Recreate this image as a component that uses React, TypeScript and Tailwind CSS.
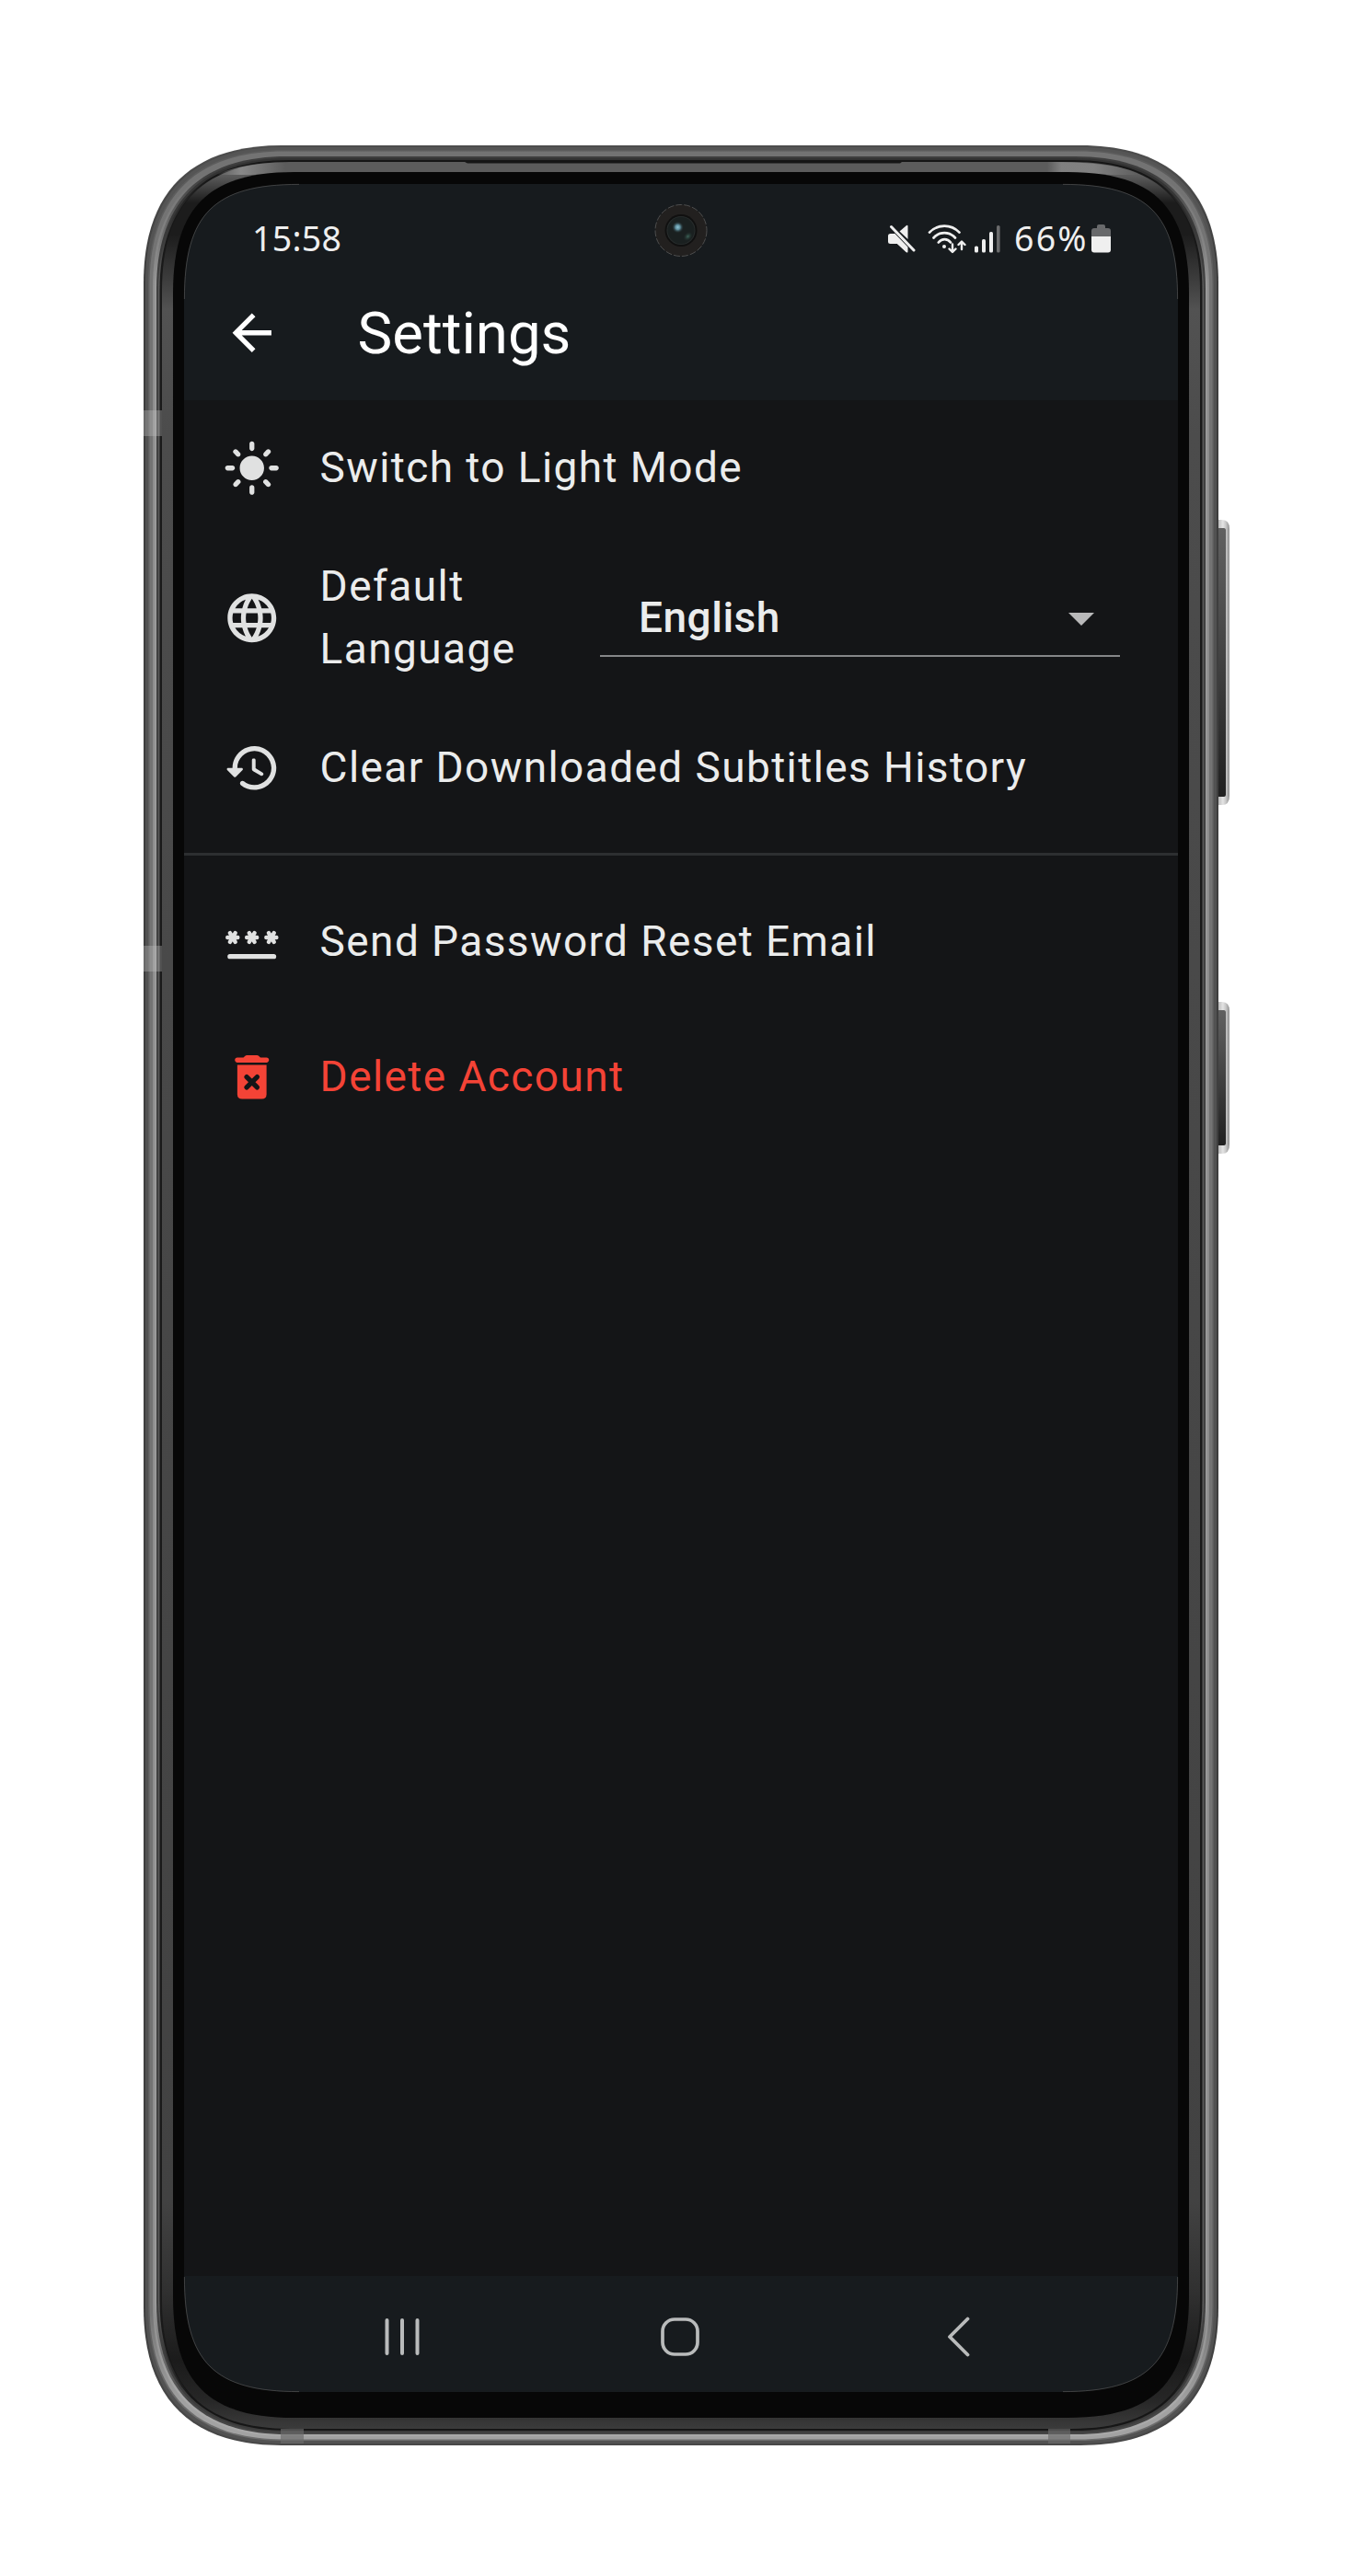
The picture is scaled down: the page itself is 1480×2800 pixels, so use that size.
import type { ReactNode } from "react";
import { MdLanguage, MdLightMode } from "react-icons/md";

/** Closed outline of a box with smoothed corners. */
function outline(l: number, t: number, r: number, b: number, e: number, k: number) {
  const c = e * k;
  return `M${l} ${t + e}C${l} ${t + c} ${l + c} ${t} ${l + e} ${t}H${r - e}C${r - c} ${t} ${r} ${t + c} ${r} ${t + e}V${b - e}C${r} ${b - c} ${r - c} ${b} ${r - e} ${b}H${l + e}C${l + c} ${b} ${l} ${b - c} ${l} ${b - e}Z`;
}

const SCREEN = outline(200, 200, 1280, 2600, 125, 0.26);

/** Metal bands from the outside in: inset, colour at the top, sides and bottom. */
const BANDS: [number, string, string, string][] = [
  [0, "#4c4c4c", "#3e3e3e", "#484848"],
  [2, "#555555", "#525252", "#525252"],
  [5, "#5c5c5c", "#5e5e5e", "#6c6c6c"],
  [6.5, "#737373", "#747474", "#a2a2a2"],
  [10, "#737373", "#8e8e8e", "#a9a9a9"],
  [12, "#3e3e3e", "#9a9a9a", "#454545"],
  [14, "#333333", "#404040", "#3c3c3c"],
  [16, "#161616", "#5a5a5a", "#161616"],
  [17.5, "#161616", "#1a1a1a", "#161616"],
];

function DeviceFrame() {
  return (
    <svg className="pointer-events-none absolute inset-0" width="1480" height="2800" viewBox="0 0 1480 2800">
      <defs>
        {BANDS.map(([i, a, b, c]) => (
          <linearGradient key={i} id={`band${i}`} x1="0" y1="0" x2="0" y2="1">
            <stop offset="0.008" stopColor={a} />
            <stop offset="0.055" stopColor={b} />
            <stop offset="0.945" stopColor={b} />
            <stop offset="0.985" stopColor={c} />
          </linearGradient>
        ))}
        <linearGradient id="lip" gradientUnits="userSpaceOnUse" x1="0" y1="176" x2="0" y2="2640">
          <stop offset="0" stopColor="#5c5c5c" />
          <stop offset="0.006" stopColor="#5c5c5c" />
          <stop offset="0.018" stopColor="#1c1c1c" />
          <stop offset="0.032" stopColor="#1c1c1c" />
          <stop offset="0.065" stopColor="#525252" />
          <stop offset="0.12" stopColor="#4c4c4c" />
          <stop offset="0.9" stopColor="#424242" />
          <stop offset="0.94" stopColor="#303030" />
          <stop offset="0.97" stopColor="#1b1b1b" />
          <stop offset="0.987" stopColor="#262626" />
          <stop offset="1" stopColor="#3b3b3b" />
        </linearGradient>
        <linearGradient id="glowL" gradientUnits="userSpaceOnUse" x1="236" y1="0" x2="310" y2="0">
          <stop offset="0" stopColor="#909090" stopOpacity="0" />
          <stop offset="0.35" stopColor="#909090" stopOpacity="0.85" />
          <stop offset="1" stopColor="#909090" stopOpacity="0" />
        </linearGradient>
        <linearGradient id="glowR" gradientUnits="userSpaceOnUse" x1="1240" y1="0" x2="1138" y2="0">
          <stop offset="0" stopColor="#909090" stopOpacity="0" />
          <stop offset="0.5" stopColor="#909090" stopOpacity="0.7" />
          <stop offset="0.85" stopColor="#909090" stopOpacity="0.7" />
          <stop offset="1" stopColor="#909090" stopOpacity="0" />
        </linearGradient>
        <linearGradient id="keyFace" x1="0" y1="0" x2="0" y2="1">
          <stop offset="0" stopColor="#606060" />
          <stop offset="0.2" stopColor="#555555" />
          <stop offset="1" stopColor="#202020" />
        </linearGradient>
        <linearGradient id="keyRim" x1="0" y1="0" x2="1" y2="0">
          <stop offset="0" stopColor="#8c8c8c" />
          <stop offset="0.6" stopColor="#e4e4e4" />
          <stop offset="0.78" stopColor="#c8c8c8" />
          <stop offset="1" stopColor="#8f8f8f" />
        </linearGradient>
        <radialGradient id="lensBlue">
          <stop offset="0" stopColor="#8fc6d6" />
          <stop offset="0.4" stopColor="#5d8d9c" />
          <stop offset="1" stopColor="#1c2526" stopOpacity="0" />
        </radialGradient>
        <radialGradient id="lensGreen">
          <stop offset="0" stopColor="#3d6559" />
          <stop offset="1" stopColor="#1c2524" stopOpacity="0" />
        </radialGradient>
        <mask id="shell">
          <path d={`M0 0H1480V2800H0Z${SCREEN}`} fill="#fff" fillRule="evenodd" />
        </mask>
      </defs>

      {[
        [565, 310],
        [1089, 165],
      ].map(([y, h]) => (
        <g key={y}>
          <path d={`M1318 ${y}H1328Q1336 ${y} 1336 ${y + 10}V${y + h - 10}Q1336 ${y + h} 1328 ${y + h}H1318Z`} fill="url(#keyRim)" />
          <path d={`M1318 ${y + 9}H1332V${y + h - 9}H1318Z`} fill="#d8d8d8" />
          <rect x="1318" y={y + 9} width="14" height={h - 18} rx="2" fill="url(#keyFace)" />
        </g>
      ))}

      <g mask="url(#shell)">
        {BANDS.map(([i]) => (
          <path key={i} d={outline(156 + i, 158 + i, 1324 - i, 2658 - i, 150 - i * 0.55, 0.34)} fill={`url(#band${i})`} />
        ))}
        <path d={outline(176, 176, 1304, 2640, 140, 0.32)} fill="url(#lip)" />
        <path d="M236 189C260 180 285 176 316 176V190H236Z" fill="url(#glowL)" />
        <path d="M1240 189C1216 180 1191 176 1138 176V190H1240Z" fill="url(#glowR)" />
        <path d={outline(188, 187, 1292, 2628, 132, 0.29)} fill="#070707" />
      </g>
      <path d="M505 176H980L978 177.500H508Z" fill="#161616" />

      <g fill="#c8c8c8" opacity="0.32">
        <rect x="156" y="446" width="20" height="28" />
        <rect x="156" y="1028" width="20" height="28" />
      </g>
      <g fill="#6c6c6c" opacity="0.65">
        <rect x="305" y="2640" width="25" height="16" />
        <rect x="1139" y="2640" width="24" height="16" />
      </g>

      <g fill="none" stroke="#5e5e5e" strokeWidth="0.6">
        <path d="M200.400 325C200.400 232.500 232.500 200.400 325 200.400" />
        <path d="M1279.600 325C1279.600 232.500 1247.500 200.400 1155 200.400" />
        <path d="M200.400 2475C200.400 2567.500 232.500 2599.600 325 2599.600" />
        <path d="M1279.600 2475C1279.600 2567.500 1247.500 2599.600 1155 2599.600" />
      </g>

      <circle cx="740" cy="250.500" r="28" fill="#22201f" stroke="#5b5b5b" strokeWidth="0.8" strokeDasharray="7 2" />
      <circle cx="740" cy="250.500" r="17.500" fill="#101010" />
      <circle cx="740" cy="250.500" r="15" fill="#1a2020" stroke="#262b2b" strokeWidth="1.200" />
      <ellipse cx="747.500" cy="257" rx="6" ry="4.500" transform="rotate(-45 747.500 257)" fill="url(#lensGreen)" />
      <circle cx="736.500" cy="247" r="6.500" fill="url(#lensBlue)" />
    </svg>
  );
}

function MutedIcon() {
  return (
    <svg width="30" height="31" viewBox="0 0 30 31" fill="#efefef">
      <path d="M0 12.500Q0 10 2.500 10H7L21 24V29.500Q21 31 19.500 30L10 21H2.500Q0 21 0 18.500Z" />
      <path d="M12.500 7.500 19.500 1.400Q21.500 0 21.500 2V16Z" />
      <path d="M3.500 2.500 28 28" stroke="#171b1e" strokeWidth="5.500" />
      <path d="M7 9.500 21.500 24.500V29.500Q21.500 31 20 30L10 21H5Z" />
      <path d="M3.500 2.500 28 28" stroke="#efefef" strokeWidth="3" strokeLinecap="round" />
    </svg>
  );
}

function WifiIcon() {
  return (
    <svg width="42" height="32" viewBox="0 0 42 32" fill="none" stroke="#efefef" strokeWidth="2.700" strokeLinecap="round" strokeLinejoin="round">
      <path d="M2 8.600C11 -.8 25.500 -.8 34.500 8.600M6.500 14.500C13 7.300 23.500 7.300 30 14.500M11.800 19.500C15.500 15 21.500 15 25 19.500" />
      <circle cx="18" cy="24" r="2" fill="#efefef" stroke="none" />
      <path d="M27 21.500V29.500M23.500 26.500 27 30 30.500 26.500M37 27V19M33.500 22 37 18.500 40.500 22" strokeWidth="2.400" />
    </svg>
  );
}

function SignalIcon() {
  return (
    <svg width="28" height="30" viewBox="0 0 28 30" fill="#efefef">
      <rect x="0" y="22.500" width="4" height="7" rx="1.600" />
      <rect x="8" y="15" width="4" height="14.500" rx="1.600" />
      <rect x="16" y="7" width="4" height="22.500" rx="1.600" />
      <rect x="24" y="0" width="3.600" height="29.500" rx="1.600" fill="#6a6b6c" />
    </svg>
  );
}

function BatteryIcon() {
  return (
    <svg width="21" height="31" viewBox="0 0 21 31">
      <path d="M0 13V7Q0 4 3 4H6V2Q6 0 8 0H13Q15 0 15 2V4H18Q21 4 21 7V13Z" fill="#68696b" />
      <path d="M0 13H21V27.500Q21 30.500 18 30.500H3Q0 30.500 0 27.500Z" fill="#efefef" />
    </svg>
  );
}

function HistoryIcon() {
  return (
    <svg width="63.500" height="63.500" viewBox="0 0 24 24" fill="currentColor">
      <path d="M13.260 3C8.170 2.860 4 6.950 4 12H2.210c-.45 0-.67.54-.35.85l2.790 2.800c.2.2.51.2.71 0l2.790-2.800c.31-.31.09-.85-.36-.85H6c0-3.900 3.180-7.050 7.100-7 3.720.05 6.850 3.180 6.900 6.900.05 3.910-3.100 7.100-7 7.100-1.610 0-3.100-.55-4.280-1.480-.4-.31-.96-.28-1.320.08-.42.42-.39 1.130.08 1.490C9 20.290 10.910 21 13 21c5.050 0 9.140-4.170 9-9.260-.13-4.690-4.050-8.610-8.740-8.740zm-.51 5c-.41 0-.75.34-.75.75v3.680c0 .35.19.68.49.86l3.120 1.850c.36.21.82.09 1.030-.26.21-.36.09-.82-.26-1.030l-2.880-1.710v-3.400c0-.4-.34-.74-.75-.74z" />
    </svg>
  );
}

function PasswordIcon() {
  return (
    <svg width="66" height="63.500" viewBox="-.35 0 24.940 24" fill="none" stroke="currentColor" strokeLinecap="round">
      <path d="M3 18H21" strokeWidth="2" />
      {[4.1, 12, 20].map((x) => (
        <path key={x} d={`M${x - 2.1} 10.200h4.200M${x - 1.08} 8.350l2.160 3.700M${x + 1.08} 8.350l-2.160 3.700`} strokeWidth="1.650" />
      ))}
    </svg>
  );
}

function DeleteIcon() {
  return (
    <svg width="63.500" height="63.500" viewBox="0 0 24 24" fill="currentColor">
      <path d="M15.500 4l-.71-.71c-.18-.18-.44-.29-.7-.29H9.910c-.26 0-.52.11-.7.290L8.500 4H6c-.55 0-1 .45-1 1s.45 1 1 1h12c.55 0 1-.45 1-1s-.45-1-1-1z" />
      <path d="M6 7H18V19Q18 21 16 21H8Q6 21 6 19Z" />
      <path d="M9.850 11.950 14.150 16.250M14.150 11.950 9.850 16.250" stroke="#141517" strokeWidth="2" strokeLinecap="round" />
    </svg>
  );
}

function Row({ icon, children, className = "" }: { icon: ReactNode; children: ReactNode; className?: string }) {
  return (
    <li className={`flex shrink-0 items-center ${className}`}>
      <span className="flex w-[147px] shrink-0 justify-center">{icon}</span>
      {children}
    </li>
  );
}

const label = "whitespace-nowrap pl-[0.600px] text-[46px] leading-[67.500px] tracking-[1.400px]";

export default function App() {
  return (
    <div className="relative h-[2800px] w-[1480px] overflow-hidden bg-white px-[200px] pt-[200px] font-['Roboto',sans-serif]">
      <main className="flex h-[2400px] w-[1080px] flex-col bg-[#141517] text-[#ebecec]">
        <header className="h-[235px] shrink-0 bg-[#171b1e]">
          <div className="flex h-[119px] items-center justify-between pr-[73px] pl-[74px] font-['Noto_Sans',sans-serif] text-[37.500px] text-[#efefef]">
            <span className="tracking-[0.250px]">15:58</span>
            <div className="flex items-center">
              <MutedIcon />
              <span className="ml-[13px]"><WifiIcon /></span>
              <span className="ml-[9px]"><SignalIcon /></span>
              <span className="ml-[15px] w-[84px] tracking-[2.200px]">66%</span>
              <BatteryIcon />
            </div>
          </div>
          <div className="flex h-[85px] items-center text-white">
            <svg className="ml-[42px]" width="63.500" height="63.500" viewBox="0 0 24 24" fill="currentColor">
              <path d="M20 11H7.830l5.590-5.590L12 4l-8 8 8 8 1.410-1.410L7.830 13H20v-2z" />
            </svg>
            <h1 className="mt-[3px] ml-[83px] text-[63.500px] leading-none">Settings</h1>
          </div>
        </header>

        <ul>
          <Row className="h-[147px]" icon={<MdLightMode size={63.5} color="#e0e1e1" />}>
            <span className={label}>Switch to Light Mode</span>
          </Row>
          <Row className="h-[179px]" icon={<MdLanguage size={63.5} color="#e0e1e1" />}>
            <span className={`${label} w-[305px]`}>
              Default
              <br />
              Language
            </span>
            <div className="flex h-[85px] w-[565px] items-center justify-between border-b-2 border-[#858688] pt-[4px] pr-[28px] pl-[42px]">
              <span className="mb-[3px] text-[46px] leading-none font-medium tracking-[0.500px]">English</span>
              <svg width="28" height="14" viewBox="0 0 28 14" fill="#b9b9ba">
                <path d="M0 0H28L14 14Z" />
              </svg>
            </div>
          </Row>
          <Row className="h-[147px]" icon={<span className="text-[#e0e1e1]"><HistoryIcon /></span>}>
            <span className={label}>Clear Downloaded Subtitles History</span>
          </Row>
        </ul>
        <hr className="mt-[19px] mb-[20px] h-[3px] shrink-0 border-0 bg-[#2d2f31]" />
        <ul>
          <Row className="h-[147px]" icon={<span className="text-[#e0e1e1]"><PasswordIcon /></span>}>
            <span className={label}>Send Password Reset Email</span>
          </Row>
          <Row className="h-[147px] text-[#f44336]" icon={<DeleteIcon />}>
            <span className={label}>Delete Account</span>
          </Row>
        </ul>

        <nav className="mt-auto flex h-[126px] shrink-0 items-center bg-[#171b1e] pl-[217px]">
          <svg width="40" height="40" viewBox="0 0 40 40" className="mt-[6px]" stroke="#b9bbbb" strokeWidth="4" strokeLinecap="round">
            <path d="M3.500 2V38M20 2V38M36.500 2V38" />
          </svg>
          <svg width="42" height="42" viewBox="0 0 42 42" className="mt-[6px] ml-[261px]" fill="none" stroke="#b9bbbb" strokeWidth="3.700">
            <rect x="2" y="2" width="38" height="38" rx="13" />
          </svg>
          <svg width="26" height="44" viewBox="0 0 26 44" className="mt-[6px] ml-[269px]" fill="none" stroke="#b9bbbb" strokeWidth="3.800" strokeLinecap="round" strokeLinejoin="round">
            <path d="M22.500 2.500 3 22 22.500 41.500" />
          </svg>
        </nav>
      </main>
      <DeviceFrame />
    </div>
  );
}
